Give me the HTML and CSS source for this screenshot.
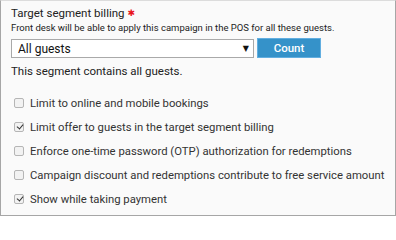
FILE: index.html
```html
<!DOCTYPE html>
<html>
<head>
<meta charset="utf-8">
<link rel="stylesheet" href="styles.css">
</head>
<body>
<div class="panel">
  <div class="label">Target segment billing <span class="req">✱</span></div>
  <div class="help">Front desk will be able to apply this campaign in the POS for all these guests.</div>
  <div class="select-row">
    <div class="select"><span>All guests</span><span class="arrow">▼</span></div>
    <button class="btn">Count</button>
  </div>
  <div class="info">This segment contains all guests.</div>
  <ul class="checks">
    <li><span class="cb"></span>Limit to online and mobile bookings</li>
    <li><span class="cb on"></span>Limit offer to guests in the target segment billing</li>
    <li><span class="cb"></span>Enforce one-time password (OTP) authorization for redemptions</li>
    <li><span class="cb"></span>Campaign discount and redemptions contribute to free service amount</li>
    <li><span class="cb on"></span>Show while taking payment</li>
  </ul>
</div>
</body>
</html>
```
FILE: styles.css
```css
html, body { margin: 0; padding: 0; }
body { font-family: Roboto, "Liberation Sans", sans-serif; color: #222; }
.panel {
  width: 396px; height: 216px; box-sizing: border-box;
  background: #fafafa;
  border: 1px solid #a6a6a6; border-top-color: #dcdcdc;
  padding: 4px 0 0 10px;
  overflow: hidden;
}
.label { font-size: 11.5px; line-height: 16px; color: #222; display: flex; align-items: center; }
.req { color: #e8141c; font-size: 9px; margin-left: 3px; font-family: "DejaVu Sans", sans-serif; }
.help { font-size: 9.5px; line-height: 13px; margin-top: 0; color: #222; }
.select-row { display: flex; margin-top: 5px; gap: 3px; }
.select {
  width: 243px; height: 19px; box-sizing: border-box;
  border: 1px solid #a9a9a9; background: #fff;
  display: flex; align-items: center; justify-content: space-between;
  padding: 0 4px 0 6px; font-size: 12px; color: #111;
}
.arrow { font-size: 8px; font-family: "DejaVu Sans", sans-serif; }
.btn {
  width: 64px; height: 20px; margin-top: -1px; box-sizing: border-box;
  background: #3592c9; border: 1px solid #62aee0; color: #fff;
  font-family: Roboto, sans-serif; font-size: 11.5px; font-weight: 500; padding: 0;
}
.info { font-size: 11.5px; margin-top: 6px; line-height: 14px; }
.checks { list-style: none; margin: 13px 0 0 0; padding: 0; }
.checks li {
  height: 24px; display: flex; align-items: center;
  font-size: 11.3px; color: #333;
}
.cb {
  width: 10px; height: 10px; box-sizing: border-box; flex: none;
  border: 1px solid #b5b5b5; border-radius: 2px; background: #f2f2f2;
  margin: 0 6px 0 3px; position: relative;
}
.cb.on::after {
  content: ""; position: absolute; left: 2.5px; top: 0px; width: 3px; height: 5px;
  border: solid #333; border-width: 0 1.5px 1.5px 0; transform: rotate(40deg);
}
```
